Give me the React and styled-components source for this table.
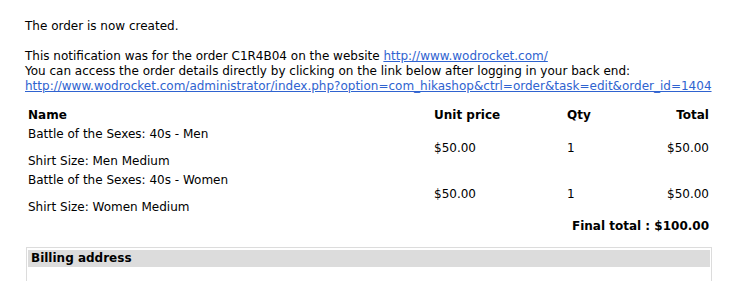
import React from 'react';
import styled, { createGlobalStyle } from 'styled-components';

const GlobalStyle = createGlobalStyle`
  body {
    margin: 0;
    background: #fff;
    color: #000;
    font-family: Verdana, "DejaVu Sans", sans-serif;
    font-size: 12px;
    line-height: 15px;
  }
`;

const Page = styled.div`
  padding: 19px 20px 0 25px;
`;

const Line = styled.div`
  margin-bottom: ${(p) => p.gap || 0}px;
  white-space: nowrap;
`;

const Link = styled.a`
  color: #2f63d0;
  text-decoration: underline;
`;

const Table = styled.table`
  width: 685px;
  margin: 12px 0 0 1px;
  border-collapse: collapse;
  table-layout: fixed;
`;

const Head = styled.th`
  padding: 2px;
  font-weight: bold;
  text-align: ${(p) => p.align || 'left'};
`;

const Cell = styled.td`
  padding: 2px;
  vertical-align: middle;
  text-align: ${(p) => p.align || 'left'};
`;

const Option = styled.div`
  margin-top: 12px;
`;

const FinalTotal = styled.td`
  padding: 2px;
  text-align: right;
  font-weight: bold;
`;

const AddressBox = styled.div`
  width: 682px;
  margin: 11px 0 0 1px;
  padding: 2px 1px 14px;
  border: 1px solid #dcdcdc;
`;

const AddressTitle = styled.div`
  background: #dcdcdc;
  padding: 1px 3px;
  font-weight: bold;
  line-height: 15px;
`;

const items = [
  { name: 'Battle of the Sexes: 40s - Men', size: 'Shirt Size: Men Medium' },
  { name: 'Battle of the Sexes: 40s - Women', size: 'Shirt Size: Women Medium' },
];

const App = () => (
  <Page>
    <GlobalStyle />
    <Line gap={15}>The order is now created.</Line>
    <Line>
      This notification was for the order C1R4B04 on the website{' '}
      <Link href="#">http://www.wodrocket.com/</Link>
    </Line>
    <Line>
      You can access the order details directly by clicking on the link below after logging in your back end:
    </Line>
    <Line>
      <Link href="#">
        http://www.wodrocket.com/administrator/index.php?option=com_hikashop&amp;ctrl=order&amp;task=edit&amp;order_id=1404
      </Link>
    </Line>

    <Table>
      <colgroup>
        <col style={{ width: 406 }} />
        <col style={{ width: 133 }} />
        <col style={{ width: 75 }} />
        <col />
      </colgroup>
      <thead>
        <tr>
          <Head>Name</Head>
          <Head>Unit price</Head>
          <Head>Qty</Head>
          <Head align="right">Total</Head>
        </tr>
      </thead>
      <tbody>
        {items.map((item) => (
          <tr key={item.name}>
            <Cell>
              {item.name}
              <Option>{item.size}</Option>
            </Cell>
            <Cell>$50.00</Cell>
            <Cell>1</Cell>
            <Cell align="right">$50.00</Cell>
          </tr>
        ))}
        <tr>
          <FinalTotal colSpan={4}>Final total : $100.00</FinalTotal>
        </tr>
      </tbody>
    </Table>

    <AddressBox>
      <AddressTitle>Billing address</AddressTitle>
    </AddressBox>
  </Page>
);

export default App;
